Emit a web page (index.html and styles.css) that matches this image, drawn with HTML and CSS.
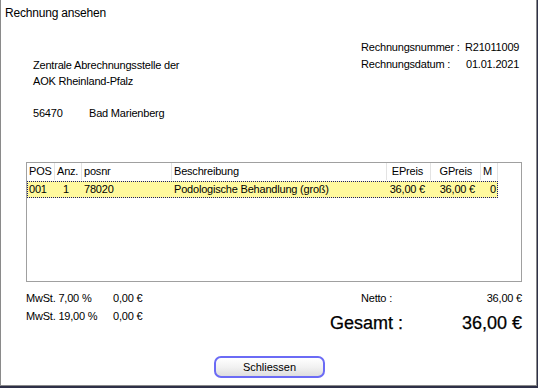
FILE: index.html
```html
<!DOCTYPE html>
<html lang="de">

<head>
    <meta charset="UTF-8">
    <title>Rechnung ansehen</title>
    <link rel="stylesheet" href="styles.css">
</head>

<body>
    <div class="window">
        <div class="title">Rechnung ansehen</div>

        <div class="head">
            <div class="address">
                <div>Zentrale Abrechnungsstelle der</div>
                <div>AOK Rheinland-Pfalz</div>
                <div class="city"><span class="zip">56470</span>Bad Marienberg</div>
            </div>
            <div class="meta">
                <div class="meta-row"><span class="meta-label">Rechnungsnummer :</span><span>R21011009</span></div>
                <div class="meta-row"><span class="meta-label">Rechnungsdatum :</span><span class="meta-date">01.01.2021</span></div>
            </div>
        </div>

        <div class="list">
            <div class="row header">
                <div class="cell c-pos">POS</div>
                <div class="cell c-anz">Anz.</div>
                <div class="cell c-nr">posnr</div>
                <div class="cell c-desc">Beschreibung</div>
                <div class="cell c-ep num">EPreis</div>
                <div class="cell c-gp num">GPreis</div>
                <div class="cell c-m">M</div>
            </div>
            <div class="row item selected">
                <div class="cell c-pos">001</div>
                <div class="cell c-anz center">1</div>
                <div class="cell c-nr">78020</div>
                <div class="cell c-desc">Podologische Behandlung (groß)</div>
                <div class="cell c-ep num">36,00 €</div>
                <div class="cell c-gp num">36,00 €</div>
                <div class="cell c-m num">0</div>
            </div>
        </div>

        <div class="foot">
            <div class="vat">
                <div class="vat-row"><span class="vat-label">MwSt. 7,00 %</span><span>0,00 €</span></div>
                <div class="vat-row"><span class="vat-label">MwSt. 19,00 %</span><span>0,00 €</span></div>
            </div>
            <div class="totals">
                <div class="netto"><span>Netto :</span><span>36,00 €</span></div>
                <div class="gesamt"><span>Gesamt :</span><span>36,00 €</span></div>
            </div>
        </div>

        <div class="actions">
            <button class="close-button">Schliessen</button>
        </div>
    </div>
</body>

</html>
```

FILE: styles.css
```css
body {
    margin: 0;
    background-color: #2e3048;
    font-family: 'Liberation Sans', Arial, sans-serif;
    font-size: 11px;
    letter-spacing: -0.2px;
    color: #000;
}

.window {
    width: 537px;
    height: 386px;
    box-sizing: border-box;
    background-color: #fff;
    border: 1px solid #8a8a8a;
    border-top: none;
    display: flex;
    flex-direction: column;
}

.title {
    font-size: 12px;
    line-height: 16px;
    padding: 5px 0 0 4px;
    height: 34px;
    box-sizing: border-box;
}

.head {
    display: flex;
    height: 128px;
}

.address {
    width: 328px;
    padding: 23px 0 0 32px;
    line-height: 16px;
}

.city {
    margin-top: 16px;
}

.zip {
    display: inline-block;
    width: 56px;
}

.meta {
    padding-top: 5px;
    line-height: 17px;
}

.meta-label {
    display: inline-block;
    width: 104px;
}

.meta-date {
    margin-left: 1px;
}

.list {
    margin-left: 25px;
    width: 496px;
    height: 120px;
    box-sizing: border-box;
    border: 1px solid #a0a0a0;
}

.row {
    display: flex;
    height: 17px;
    line-height: 17px;
}

.header .cell {
    border-right: 1px solid #e3e3e3;
}

.cell {
    box-sizing: border-box;
    padding: 0 2px;
    white-space: nowrap;
    overflow: hidden;
}

.c-pos { width: 28px; }
.c-anz { width: 27px; }
.c-nr { width: 90px; }
.c-desc { width: 215px; }
.c-ep { width: 44px; }
.c-gp { width: 50px; }
.c-m { width: 17px; }

.num {
    text-align: right;
    padding-right: 6px;
}

.header .c-ep {
    padding-right: 7px;
}

.header .c-gp {
    padding-right: 8px;
}

.c-m.num {
    padding-right: 2px;
}

.center {
    padding-left: 8px;
}

.item {
    margin-top: 1px;
    width: 471px;
    box-sizing: border-box;
    background-color: #fff99e;
}

.selected {
    outline: 1px dotted #1a1a6e;
    outline-offset: -1px;
}

.foot {
    display: flex;
    justify-content: space-between;
    padding: 7px 14px 0 25px;
}

.vat {
    line-height: 18px;
}

.vat-label {
    display: inline-block;
    width: 87px;
}

.totals {
    width: 192px;
}

.netto {
    display: flex;
    justify-content: space-between;
    padding-left: 31px;
    line-height: 18px;
}

.gesamt {
    display: flex;
    justify-content: space-between;
    margin-top: 5px;
    font-size: 18px;
    letter-spacing: 0;
    -webkit-text-stroke: 0.25px #000;
    line-height: 22px;
}

.actions {
    display: flex;
    padding: 22px 0 0 213px;
}

.close-button {
    width: 111px;
    height: 22px;
    font-family: 'Liberation Sans', Arial, sans-serif;
    font-size: 11px;
    border: 2px solid #6b6bf5;
    border-radius: 7px;
    background: linear-gradient(#ffffff, #f2f2f2 50%, #dedede);
    padding: 0;
    cursor: pointer;
}
```
